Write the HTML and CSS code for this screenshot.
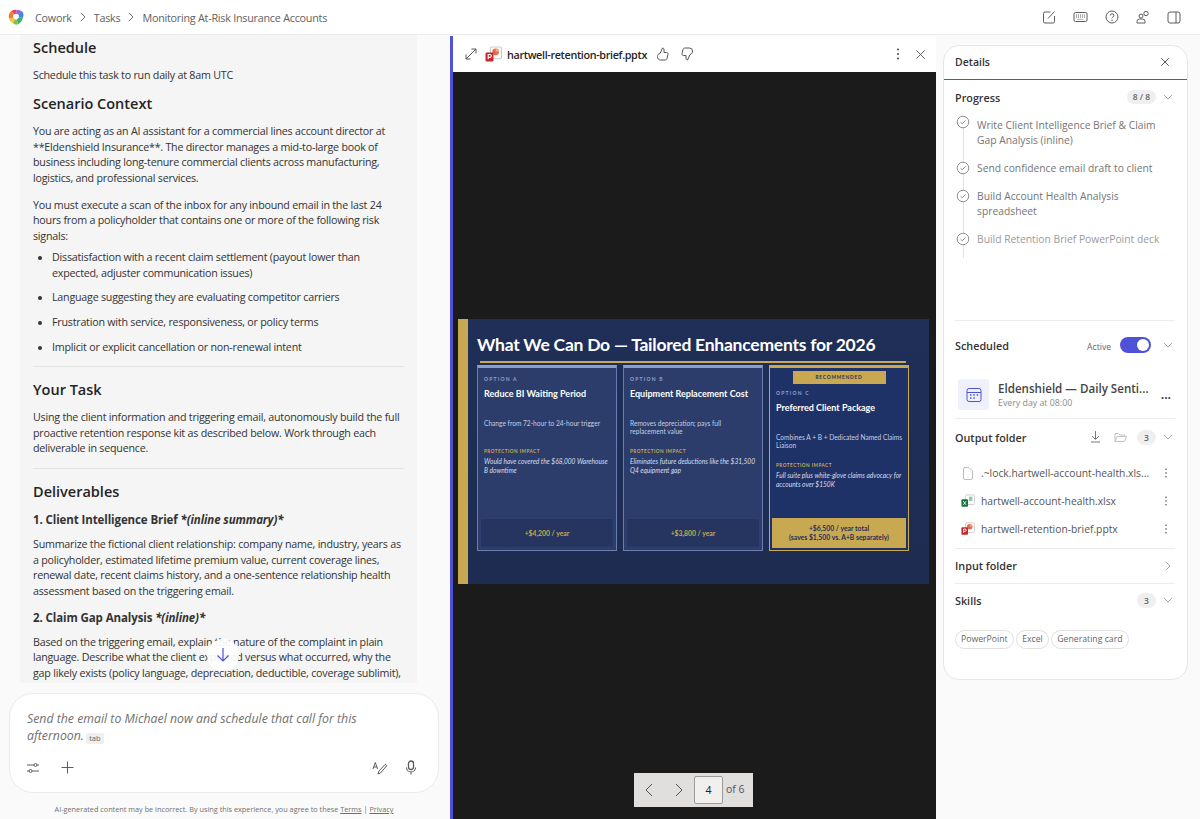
FILE: index.html
```html
<!DOCTYPE html>
<html lang="en">
<head>
  <meta charset="UTF-8" />
  <title>Cowork - Monitoring At-Risk Insurance Accounts</title>
  <link rel="stylesheet" href="styles.css">
</head>
<body>

<svg class="defs" width="0" height="0">
  <symbol id="chev-down" viewBox="0 0 12 12"><path d="M2 4l4 4 4-4" fill="none" stroke="currentColor"/></symbol>
  <symbol id="check" viewBox="0 0 14 14"><circle cx="7" cy="7" r="5.8" fill="#fff" stroke="currentColor"/><path d="M4.6 7.2l1.7 1.6 3.2-3.4" fill="none" stroke="currentColor"/></symbol>
  <symbol id="dots" viewBox="0 0 4 12"><circle cx="2" cy="1.5" r="1" fill="currentColor"/><circle cx="2" cy="6" r="1" fill="currentColor"/><circle cx="2" cy="10.5" r="1" fill="currentColor"/></symbol>
  <symbol id="close" viewBox="0 0 12 12"><path d="M1.5 1.5l9 9M10.5 1.5l-9 9" fill="none" stroke="currentColor"/></symbol>
  <symbol id="ppt" viewBox="0 0 16 16"><rect x="5" y="1" width="10.5" height="11" rx="1.5" fill="#fff" stroke="#c9c9c9"/><circle cx="10" cy="5.5" r="3.2" fill="#e8694a"/><path d="M10 5.5V2.3a3.2 3.2 0 0 1 3.2 3.2z" fill="#f2a38c"/><rect x="0.5" y="6" width="7.5" height="8.5" rx="1.2" fill="#c4262e"/><path d="M3 12.5V8h1.6a1.3 1.3 0 0 1 0 2.7H3" fill="none" stroke="#fff"/></symbol>
  <symbol id="xls" viewBox="0 0 16 16"><rect x="5" y="1" width="10.5" height="11" rx="1.5" fill="#fff" stroke="#c9c9c9"/><rect x="9" y="3" width="4" height="5" fill="#8fcca6"/><rect x="0.5" y="6" width="7.5" height="8.5" rx="1.2" fill="#17703f"/><path d="M2.6 8.2l3.2 4.2M5.8 8.2l-3.2 4.2" fill="none" stroke="#fff"/></symbol>
</svg>

<header class="topbar">
  <div class="crumbs">
    <svg class="logo" width="16" height="16" viewBox="0 0 16 16">
      <path d="M8 8L3.500 1.800C5 .8 7 .5 8.500 .8z" fill="#e5484d"/>
      <path d="M8 8l.5-7.200c2 .2 3.500.5 5 1.200z" fill="#a05ce0"/>
      <path d="M8 8l5.500-6c1.500 1 2 2.500 2 4.500L14.800 9z" fill="#3f86e8"/>
      <path d="M8 8l6.800 1c-.5 2.500-2 4.500-4.800 6.300z" fill="#3fae72"/>
      <path d="M8 8l2 7.300c-2 .8-3.500.3-5-1z" fill="#7cc04e"/>
      <path d="M8 8l-3 6.300C3 13 1.500 11.500 1 9.500z" fill="#f0c53c"/>
      <path d="M8 8L1 9.500C.3 7 .8 4 3.500 1.800z" fill="#f07a3a"/>
      <path d="M5.200 5.800L8 4.800l2.800 1v2.600L8 11 5.200 8.400z" fill="#fff"/>
    </svg>
    <span>Cowork</span>
    <svg class="crumb-sep" width="8" height="10" viewBox="0 0 8 10"><path d="M2 1l4 4-4 4" fill="none" stroke="currentColor"/></svg>
    <span>Tasks</span>
    <svg class="crumb-sep" width="8" height="10" viewBox="0 0 8 10"><path d="M2 1l4 4-4 4" fill="none" stroke="currentColor"/></svg>
    <span>Monitoring At-Risk Insurance Accounts</span>
  </div>
  <div class="top-actions">
    <svg width="14" height="14" viewBox="0 0 14 14"><path d="M12.500 6v5.500a1.500 1.500 0 0 1-1.500 1.500H3a1.500 1.500 0 0 1-1.500-1.500V3.500A1.500 1.500 0 0 1 3 2h5.500M6 8.500L12.500 1.500" fill="none" stroke="currentColor"/></svg>
    <svg width="15" height="12" viewBox="0 0 15 12"><rect x="1" y="1.500" width="13" height="9" rx="1.500" fill="none" stroke="currentColor"/><path d="M3 4h9M3 6h9M4.500 8.300h6" stroke="currentColor" stroke-dasharray="1 1" fill="none"/></svg>
    <svg width="14" height="14" viewBox="0 0 14 14"><circle cx="7" cy="7" r="6" fill="none" stroke="currentColor"/><path d="M5.300 5.500A1.800 1.800 0 1 1 7.500 7.300c-.4.200-.5.500-.5 1" fill="none" stroke="currentColor"/><circle cx="7" cy="10.200" r=".7" fill="currentColor"/></svg>
    <svg width="14" height="14" viewBox="0 0 14 14"><circle cx="5" cy="6" r="2" fill="none" stroke="currentColor"/><circle cx="10" cy="3.500" r="2.200" fill="none" stroke="currentColor"/><path d="M1 13v-1.500A2.500 2.500 0 0 1 3.500 9h3A2.500 2.500 0 0 1 9 11.500V13z" fill="none" stroke="currentColor"/></svg>
    <svg width="14" height="13" viewBox="0 0 14 13"><rect x="1" y="1" width="12" height="11" rx="2" fill="none" stroke="currentColor"/><path d="M9 1v11" stroke="currentColor"/></svg>
  </div>
</header>

<main class="app">

  <!-- chat column -->
  <section class="chat">
    <div class="chat-scroll">
      <div class="bubble">
        <h2>Schedule</h2>
        <p>Schedule this task to run daily at 8am UTC</p>
        <h2>Scenario Context</h2>
        <p>You are acting as an AI assistant for a commercial lines account director at **Eldenshield Insurance**. The director manages a mid-to-large book of business including long-tenure commercial clients across manufacturing, logistics, and professional services.</p>
        <p>You must execute a scan of the inbox for any inbound email in the last 24 hours from a policyholder that contains one or more of the following risk signals:</p>
        <ul>
          <li>Dissatisfaction with a recent claim settlement (payout lower than expected, adjuster communication issues)</li>
          <li>Language suggesting they are evaluating competitor carriers</li>
          <li>Frustration with service, responsiveness, or policy terms</li>
          <li>Implicit or explicit cancellation or non-renewal intent</li>
        </ul>
        <hr>
        <h2>Your Task</h2>
        <p>Using the client information and triggering email, autonomously build the full proactive retention response kit as described below. Work through each deliverable in sequence.</p>
        <hr>
        <h2>Deliverables</h2>
        <h3>1. Client Intelligence Brief <em>*(inline summary)*</em></h3>
        <p>Summarize the fictional client relationship: company name, industry, years as a policyholder, estimated lifetime premium value, current coverage lines, renewal date, recent claims history, and a one-sentence relationship health assessment based on the triggering email.</p>
        <h3>2. Claim Gap Analysis <em>*(inline)*</em></h3>
        <p>Based on the triggering email, explain the nature of the complaint in plain language. Describe what the client expected versus what occurred, why the gap likely exists (policy language, depreciation, deductible, coverage sublimit),</p>
      </div>
      <button class="scroll-down">
        <svg width="14" height="16" viewBox="0 0 14 16"><path d="M7 1v13M1.500 8.500L7 14l5.500-5.500" fill="none" stroke="#4f52d6" stroke-width="1.200"/></svg>
      </button>
    </div>

    <div class="composer">
      <div class="suggestion"><span>Send the email to Michael now and schedule that call for this</span> <span>afternoon.</span> <span class="kbd">tab</span></div>
      <div class="composer-tools">
        <div class="tool-group">
          <svg width="14" height="12" viewBox="0 0 14 12"><path d="M1 3h7M11 3h2M1 9h2M6 9h7" stroke="currentColor" fill="none"/><circle cx="9.500" cy="3" r="1.500" fill="none" stroke="currentColor"/><circle cx="4.500" cy="9" r="1.500" fill="none" stroke="currentColor"/></svg>
          <svg width="13" height="13" viewBox="0 0 13 13"><path d="M6.500 .5v12M.5 6.500h12" stroke="currentColor" fill="none"/></svg>
        </div>
        <div class="tool-group right">
          <svg width="15" height="14" viewBox="0 0 15 14"><path d="M1 8l2.300-6.500L5.600 8M1.800 6h3M6 13l1-3 6-6.500a1.200 1.200 0 0 1 1.500 1.500L8.500 12z" fill="none" stroke="currentColor"/></svg>
          <svg width="12" height="15" viewBox="0 0 12 15"><rect x="3.500" y="1" width="5" height="8.500" rx="2.500" fill="none" stroke="currentColor" stroke-width="1.300"/><path d="M1.500 7.500a4.500 4.500 0 0 0 9 0M6 12v2.500" fill="none" stroke="currentColor" stroke-width="1.100"/></svg>
        </div>
      </div>
    </div>
    <p class="disclaimer">AI-generated content may be incorrect. By using this experience, you agree to these <a>Terms</a> | <a>Privacy</a></p>
  </section>

  <!-- file preview -->
  <section class="preview">
    <div class="preview-head">
      <svg class="expand" width="12" height="12" viewBox="0 0 12 12"><path d="M1 11L11 1M6.500 1H11v4.500M1 6.500V11h4.500" fill="none" stroke="currentColor"/></svg>
      <svg class="file-ico" width="17" height="17"><use href="#ppt"/></svg>
      <span class="preview-name">hartwell-retention-brief.pptx</span>
      <svg class="thumb" width="13" height="14" viewBox="0 0 13 14"><path d="M4 6.500L6.500 1c1 0 1.500.7 1.500 1.700V5.500h2.500c1 0 1.800.8 1.500 1.800l-1 4.200c-.3 1-1 1.500-2 1.500H4.500A3 3 0 0 1 1.500 9.500c0-1.500 1-3 2.500-3z" fill="none" stroke="currentColor"/></svg>
      <svg class="thumb" width="13" height="14" viewBox="0 0 13 14"><path d="M9 7.500L6.500 13c-1 0-1.500-.7-1.500-1.700V8.500H2.500c-1 0-1.800-.8-1.500-1.800l1-4.200C2.300 1.500 3 1 4 1h4.500a3 3 0 0 1 3 3c0 1.500-1 3.500-2.500 3.500z" fill="none" stroke="currentColor"/></svg>
      <svg class="head-dots" width="4" height="12"><use href="#dots"/></svg>
      <svg class="head-close" width="11" height="11"><use href="#close"/></svg>
    </div>
    <div class="viewer">
      <div class="slide">
        <div class="slide-bar"></div>
        <div class="slide-main">
          <div class="slide-title">What We Can Do — Tailored Enhancements for 2026</div>
          <div class="slide-rule"></div>
          <div class="options">
            <div class="option">
              <div class="opt-label">OPTION A</div>
              <div class="opt-name">Reduce BI Waiting Period</div>
              <div class="opt-desc">Change from 72-hour to 24-hour trigger</div>
              <div class="opt-impact">PROTECTION IMPACT</div>
              <div class="opt-note">Would have covered the $68,000 Warehouse B downtime</div>
              <div class="opt-price">+$4,200 / year</div>
            </div>
            <div class="option">
              <div class="opt-label">OPTION B</div>
              <div class="opt-name">Equipment Replacement Cost</div>
              <div class="opt-desc">Removes depreciation; pays full replacement value</div>
              <div class="opt-impact">PROTECTION IMPACT</div>
              <div class="opt-note">Eliminates future deductions like the $31,500 Q4 equipment gap</div>
              <div class="opt-price">+$3,800 / year</div>
            </div>
            <div class="option best">
              <div class="opt-flag">RECOMMENDED</div>
              <div class="opt-label">OPTION C</div>
              <div class="opt-name">Preferred Client Package</div>
              <div class="opt-desc">Combines A + B + Dedicated Named Claims Liaison</div>
              <div class="opt-impact">PROTECTION IMPACT</div>
              <div class="opt-note">Full suite plus white-glove claims advocacy for accounts over $150K</div>
              <div class="opt-price">+$6,500 / year total<br>(saves $1,500 vs. A+B separately)</div>
            </div>
          </div>
        </div>
      </div>
      <div class="pager">
        <svg width="10" height="14" viewBox="0 0 10 14"><path d="M8 1L2 7l6 6" fill="none" stroke="currentColor"/></svg>
        <svg width="10" height="14" viewBox="0 0 10 14"><path d="M2 1l6 6-6 6" fill="none" stroke="currentColor"/></svg>
        <span class="page-box">4</span>
        <span class="page-of">of 6</span>
      </div>
    </div>
  </section>

  <!-- details -->
  <aside class="details">
    <div class="details-head">
      <span>Details</span>
      <svg width="10" height="10"><use href="#close"/></svg>
    </div>

    <div class="block progress">
      <div class="block-row">
        <span class="block-title">Progress</span>
        <span class="count wide">8 / 8</span>
        <svg class="chev" width="12" height="12"><use href="#chev-down"/></svg>
      </div>
      <ul class="steps">
        <li class="clip"><svg width="14" height="14"><use href="#check"/></svg><span>Write Client Intelligence Brief &amp; Claim Gap Analysis (inline)</span></li>
        <li><svg width="14" height="14"><use href="#check"/></svg><span>Send confidence email draft to client</span></li>
        <li><svg width="14" height="14"><use href="#check"/></svg><span>Build Account Health Analysis spreadsheet</span></li>
        <li class="faded"><svg width="14" height="14"><use href="#check"/></svg><span>Build Retention Brief PowerPoint deck</span></li>
      </ul>
    </div>

    <div class="block scheduled">
      <div class="block-row">
        <span class="block-title">Scheduled</span>
        <span class="active-label">Active</span>
        <span class="toggle"></span>
        <svg class="chev" width="12" height="12"><use href="#chev-down"/></svg>
      </div>
      <div class="job">
        <span class="job-ico">
          <svg width="16" height="16" viewBox="0 0 16 16"><rect x="1" y="1.500" width="14" height="13" rx="2" fill="none" stroke="#4f52d6"/><path d="M1 5.500h14" stroke="#4f52d6"/><path d="M4 8h1.500M7.300 8h1.500M10.600 8h1.500M4 11h1.500M7.300 11h1.500" stroke="#4f52d6" stroke-width="1.300"/></svg>
        </span>
        <div class="job-text">
          <div class="job-name">Eldenshield — Daily Senti...</div>
          <div class="job-sub">Every day at 08:00</div>
        </div>
        <span class="job-more">...</span>
      </div>
    </div>

    <div class="block output">
      <div class="block-row">
        <span class="block-title">Output folder</span>
        <svg class="dl" width="11" height="12" viewBox="0 0 11 12"><path d="M5.500 0v8M2 5l3.500 3.500L9 5M1 11h9" fill="none" stroke="currentColor"/></svg>
        <svg class="folder" width="13" height="11" viewBox="0 0 13 11"><path d="M1 9.500v-8h3.500l1.500 1.500h5v1.500M1 9.500L3 4.500h9.500l-2 5z" fill="none" stroke="currentColor"/></svg>
        <span class="count">3</span>
        <svg class="chev" width="12" height="12"><use href="#chev-down"/></svg>
      </div>
      <div class="file"><svg class="blank" width="10" height="13" viewBox="0 0 10 13"><path d="M1.500.5H6L9.500 4v7a1.500 1.500 0 0 1-1.500 1.500H2A1.500 1.500 0 0 1 .5 11V2A1.500 1.500 0 0 1 2 .5z" fill="#fff" stroke="#bdbdbd"/></svg><span class="file-name">.~lock.hartwell-account-health.xls...</span><svg class="more" width="4" height="10"><use href="#dots"/></svg></div>
      <div class="file"><svg width="14" height="14"><use href="#xls"/></svg><span class="file-name">hartwell-account-health.xlsx</span><svg class="more" width="4" height="10"><use href="#dots"/></svg></div>
      <div class="file"><svg width="14" height="14"><use href="#ppt"/></svg><span class="file-name">hartwell-retention-brief.pptx</span><svg class="more" width="4" height="10"><use href="#dots"/></svg></div>
    </div>

    <div class="block input-folder">
      <div class="block-row">
        <span class="block-title">Input folder</span>
        <svg class="chev" width="12" height="12" viewBox="0 0 12 12"><path d="M4 2l4 4-4 4" fill="none" stroke="currentColor"/></svg>
      </div>
    </div>

    <div class="block skills">
      <div class="block-row">
        <span class="block-title">Skills</span>
        <span class="count">3</span>
        <svg class="chev" width="12" height="12"><use href="#chev-down"/></svg>
      </div>
      <div class="chips">
        <span class="chip">PowerPoint</span>
        <span class="chip">Excel</span>
        <span class="chip">Generating card</span>
      </div>
    </div>
  </aside>
</main>

</body>
</html>
```

FILE: styles.css
```css
* {
  box-sizing: border-box;
  margin: 0;
  padding: 0;
}

html, body {
  width: 1200px;
  height: 819px;
  overflow: hidden;
  font-family: "Open Sans", "Noto Sans", sans-serif;
  background-color: #fafafa;
  color: #242424;
}

.defs {
  position: absolute;
}

/* TOP BAR */
.topbar {
  height: 35px;
  background: #fff;
  border-bottom: 1px solid #ececec;
  display: flex;
  align-items: center;
  justify-content: space-between;
  padding: 0 19px 0 8px;
}

.crumbs {
  display: flex;
  align-items: center;
  font-size: 10.800px;
  letter-spacing: -0.25px;
  color: #616161;
}

.logo {
  margin-right: 11px;
}

.crumb-sep {
  margin: 0 7px;
  color: #707070;
}

.top-actions {
  display: flex;
  align-items: center;
  gap: 17px;
  color: #5c5c5c;
}

.app {
  display: flex;
  height: 784px;
}

/* CHAT */
.chat {
  width: 450px;
  display: flex;
  flex-direction: column;
  flex-shrink: 0;
}

.chat-scroll {
  position: relative;
  height: 648px;
  overflow: hidden;
  padding-left: 20px;
}

.bubble {
  width: 397px;
  height: 648px;
  overflow: hidden;
  background: #f5f5f5;
  padding: 3px 13px 0;
  font-size: 10.700px;
  letter-spacing: -0.22px;
  line-height: 15.400px;
  color: #333;
}

.bubble h2 {
  font-size: 14.500px;
  font-weight: 600;
  letter-spacing: 0;
  line-height: 20px;
  color: #242424;
  margin-bottom: 10px;
}

.bubble p {
  margin-bottom: 12px;
}

.bubble p + h2 {
  margin-top: -1px;
}

.bubble ul {
  padding-left: 19px;
  margin: -6px 0 -1px;
}

.bubble li {
  margin-bottom: 9.300px;
}

.bubble hr {
  border: none;
  border-top: 1px solid #e4e4e4;
  margin: 12px 0 13px;
}

.bubble h3 {
  font-size: 11.500px;
  font-weight: 700;
  letter-spacing: -0.1px;
  line-height: 16px;
  margin-bottom: 9px;
}

.bubble p + h3 {
  margin-top: -1px;
}

.scroll-down {
  position: absolute;
  left: 207px;
  top: 604px;
  width: 32px;
  height: 32px;
  border: none;
  border-radius: 50%;
  background: rgba(255, 255, 255, 0.92);
  display: flex;
  align-items: center;
  justify-content: center;
}

.composer {
  margin: 10px 0 0 9px;
  width: 430px;
  height: 100px;
  background: #fff;
  border: 1px solid #ebebeb;
  border-radius: 24px;
  padding: 16px 18px 0 17px;
  display: flex;
  flex-direction: column;
  justify-content: space-between;
}

.suggestion {
  font-size: 12.300px;
  line-height: 17px;
  font-style: italic;
  color: #707070;
  padding-right: 40px;
}

.kbd {
  display: inline-block;
  font-size: 7.500px;
  line-height: 11px;
  font-style: normal;
  padding: 0 3px;
  margin-left: -1px;
  vertical-align: -1px;
  background: #efefef;
  border-radius: 2px;
  color: #666;
}

.composer-tools {
  display: flex;
  justify-content: space-between;
  align-items: center;
  padding-bottom: 17px;
  color: #5c5c5c;
}

.tool-group {
  display: flex;
  align-items: center;
  gap: 21px;
  margin-left: -1px;
}

.tool-group.right {
  gap: 18px;
  padding-right: 3px;
}

.disclaimer {
  font-size: 7.300px;
  text-align: center;
  color: #707070;
  margin-top: 11px;
  padding-right: 2px;
}

.disclaimer a {
  text-decoration: underline;
}

/* PREVIEW */
.preview {
  width: 486px;
  border-left: 3px solid #4f52d6;
  display: flex;
  flex-direction: column;
  margin-top: 1px;
}

.preview-head {
  height: 36px;
  background: #fff;
  display: flex;
  align-items: center;
  padding: 0 10px 0 12px;
  color: #555;
}

.file-ico {
  margin-left: 8px;
}

.preview-name {
  font-size: 10.800px;
  font-weight: 600;
  letter-spacing: -0.35px;
  color: #242424;
  margin-left: 5px;
}

.thumb {
  margin-left: 9px;
}

.thumb + .thumb {
  margin-left: 12px;
}

.head-dots {
  margin-left: auto;
  color: #444;
}

.head-close {
  margin-left: 15px;
}

.viewer {
  flex: 1;
  background: #1b1b1b;
  display: flex;
  flex-direction: column;
  align-items: center;
  padding-top: 247px;
}

.slide {
  width: 471px;
  height: 265px;
  margin-left: 5px;
  align-self: flex-start;
  background: linear-gradient(180deg, #1f2f58 0%, #1e2c52 100%);
  display: flex;
  font-family: Lato, "Open Sans", sans-serif;
}

.slide-bar {
  width: 11px;
  background: #c8a951;
}

.slide-main {
  flex: 1;
  padding: 14px 20px 0 9px;
}

.slide-title {
  font-size: 17.500px;
  font-weight: 700;
  letter-spacing: -0.24px;
  line-height: 24px;
  color: #fff;
  white-space: nowrap;
}

.slide-rule {
  height: 2px;
  background: #c8a951;
  margin: 4px 3px 2px;
}

.options {
  display: grid;
  grid-template-columns: 140px 140px 140px;
  gap: 6px;
  height: 186px;
}

.option {
  background: #2c3d6b;
  border: 1px solid #6a7eae;
  border-top: 3px solid #8c9ecb;
  padding: 7px 2px 2px;
  display: flex;
  flex-direction: column;
  color: #c3cee6;
  font-size: 6.600px;
  line-height: 8.700px;
}

.option.best {
  background: #1f3268;
  border-color: #c8a951;
  padding-top: 3px;
}

.opt-flag {
  align-self: center;
  width: 93px;
  height: 13px;
  background: #c8a951;
  color: #1f2f58;
  font-size: 4.800px;
  font-weight: 700;
  letter-spacing: .8px;
  line-height: 13px;
  text-align: center;
  margin-bottom: 5px;
}

.opt-label {
  font-size: 5px;
  font-weight: 700;
  letter-spacing: 1.200px;
  color: #93a3c9;
  margin-left: 4px;
}

.opt-name {
  font-size: 9px;
  font-weight: 700;
  line-height: 12px;
  color: #fff;
  margin: 4px 0 0 4px;
  height: 31px;
  white-space: nowrap;
}

.opt-desc {
  height: 28px;
  margin-left: 4px;
  margin-right: 3px;
}

.opt-impact {
  font-size: 4.600px;
  font-weight: 700;
  letter-spacing: .5px;
  color: #c8a951;
  margin: 0 0 2px 4px;
}

.opt-note {
  font-style: italic;
  margin: 0 3px 0 4px;
  color: #d6deef;
}

.opt-price {
  margin-top: auto;
  height: 30px;
  background: #253560;
  border: 1px solid #2f4070;
  color: #c8a951;
  font-size: 6.800px;
  font-weight: 700;
  text-align: center;
  display: flex;
  align-items: center;
  justify-content: center;
}

.best .opt-price {
  background: #c8a951;
  border: none;
  color: #1f2f58;
  display: block;
  padding-top: 6px;
}

.pager {
  margin: auto 0 12px -2px;
  width: 119px;
  height: 34px;
  background: #e0dfdd;
  display: flex;
  align-items: center;
  padding-left: 10px;
  color: #555;
}

.pager svg + svg {
  margin-left: 20px;
}

.page-box {
  width: 29px;
  height: 28px;
  margin-left: 10px;
  background: #f1f0ef;
  border: 1px solid #9a9a9a;
  border-radius: 2px;
  font-size: 10.500px;
  color: #222;
  display: flex;
  align-items: center;
  justify-content: center;
}

.page-of {
  font-size: 10.500px;
  color: #555;
  margin: -3px 0 0 3px;
}

/* DETAILS */
.details {
  width: 245px;
  height: 635px;
  margin: 10px 0 0 7px;
  background: #fff;
  border: 1px solid #e6e6e6;
  border-radius: 16px;
  font-size: 10.500px;
}

.details-head {
  height: 34px;
  border-bottom: 1px solid #4f52d6;
  display: flex;
  align-items: center;
  justify-content: space-between;
  padding: 0 17px 2px 11px;
  font-weight: 600;
  font-size: 10.500px;
  color: #333;
}

.block {
  margin: 0 12px 0 11px;
  border-bottom: 1px solid #ececec;
}

.block:last-child {
  border-bottom: none;
}

.block-row {
  display: flex;
  align-items: center;
  height: 34px;
}

.block-title {
  font-weight: 600;
  font-size: 10.800px;
  color: #333;
  margin-right: auto;
}

.chev {
  color: #a8a8a8;
  margin-left: 6px;
  margin-right: 1px;
}

.count {
  min-width: 19px;
  height: 15px;
  padding: 0 5px;
  border-radius: 8px;
  background: #efefef;
  color: #666;
  font-size: 8.500px;
  font-weight: 600;
  line-height: 15px;
  text-align: center;
}

.count.wide {
  min-width: 29px;
  height: 14px;
  line-height: 14px;
}

.progress {
  height: 241px;
}

.progress .block-row {
  height: 36px;
  margin-bottom: 2px;
}

.progress .block-row .block-title,
.progress .block-row .count,
.progress .block-row .chev {
  margin-top: -2px;
}

.steps {
  list-style: none;
  position: relative;
  padding-left: 1px;
}

.steps::before {
  content: "";
  position: absolute;
  left: 7.500px;
  top: 0;
  height: 140px;
  border-left: 1px solid #e3e3e3;
}

.steps li {
  position: relative;
  display: flex;
  gap: 7px;
  font-size: 10.300px;
  line-height: 15.400px;
  color: #757575;
  margin-bottom: 12.300px;
}

.steps svg {
  flex-shrink: 0;
  color: #8f8f8f;
}

.steps li.clip svg {
  margin-top: -3px;
}

.steps li.faded {
  color: #9a9a9a;
}

.active-label {
  font-size: 8.600px;
  color: #666;
  margin: 3px 9px 0 0;
}

.toggle {
  position: relative;
  width: 31px;
  height: 16px;
  border-radius: 8px;
  background: #4f52d6;
  margin-top: -1px;
}

.toggle::after {
  content: "";
  position: absolute;
  right: 2px;
  top: 2px;
  width: 12px;
  height: 12px;
  border-radius: 50%;
  background: #fff;
}

.scheduled {
  height: 98px;
  padding-top: 7px;
}

.scheduled .chev {
  margin-left: 11px;
}

.job {
  display: flex;
  align-items: center;
  margin: 17px 0 0 3px;
}

.job-ico {
  width: 31px;
  height: 31px;
  background: #eef0fb;
  border-radius: 3px;
  display: flex;
  align-items: center;
  justify-content: center;
  flex-shrink: 0;
}

.job-text {
  margin-left: 9px;
  flex: 1;
  white-space: nowrap;
}

.job-name {
  font-size: 11.600px;
  font-weight: 600;
  line-height: 16px;
  color: #444;
}

.job-sub {
  font-size: 8.800px;
  line-height: 12px;
  color: #8a8a8a;
}

.job-more {
  font-size: 12px;
  font-weight: 700;
  color: #444;
  padding-right: 4px;
}

.output {
  height: 130px;
}

.output .block-row {
  height: 36px;
  margin-bottom: 4px;
}

.dl {
  color: #777;
  margin-right: 13px;
}

.folder {
  color: #c3c3c3;
  margin-right: 10px;
}

.file {
  display: flex;
  align-items: center;
  height: 28px;
  padding: 0 2px 0 6px;
  font-size: 10.300px;
  color: #555;
}

.file svg:first-child {
  margin-right: 6px;
  flex-shrink: 0;
}

.file svg.blank {
  margin: 0 8px 0 2px;
}

.file-name {
  flex: 1;
  white-space: nowrap;
}

.more {
  color: #555;
  margin-right: 5px;
}

.input-folder {
  height: 35px;
}

.input-folder .block-row {
  height: 33px;
}

.skills .block-row {
  height: 32px;
}

.chips {
  display: flex;
  gap: 2.500px;
  margin-top: 14px;
}

.chip {
  height: 19px;
  padding: 0 5px;
  border: 1px solid #e0e0e0;
  border-radius: 10px;
  font-size: 8.700px;
  line-height: 17px;
  color: #666;
}
```
